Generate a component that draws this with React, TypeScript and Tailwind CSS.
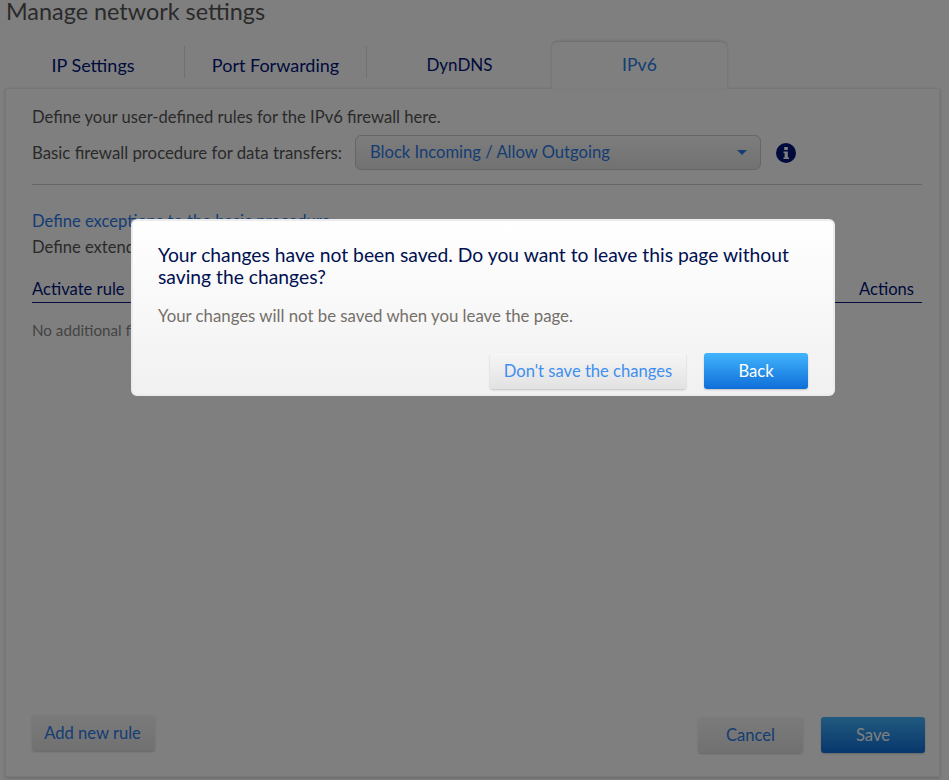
const font = "font-['Lato','Noto_Sans',sans-serif]"

function TabLabel({ label, className, divider }: { label: string; className: string; divider?: boolean }) {
  return (
    <div className={`${className} flex h-[32px] items-center justify-center pt-[6px] text-[#001478] ${divider ? 'border-r border-[#e2e2e2]' : ''}`}>
      {label}
    </div>
  )
}

function PageButton({ label, primary, className }: { label: string; primary?: boolean; className?: string }) {
  return (
    <button
      className={`h-[36px] rounded-[3px] text-[16.6px] shadow-[0_1px_2px_rgba(0,0,0,0.2)] ${
        primary
          ? 'bg-gradient-to-b from-[#42b4fc] to-[#0f6ed8] text-white'
          : 'bg-gradient-to-b from-[#f6f6f6] to-[#e2e2e2] text-[#2a7ae8]'
      } ${className ?? ''}`}
    >
      {label}
    </button>
  )
}

export default function App() {
  return (
    <div className={`${font} relative flex h-[780px] w-[949px] flex-col overflow-hidden bg-white`}>
      <h1 className="pl-[6px] text-[23.4px] leading-[23px] text-[#555]">Manage network settings</h1>

      <div className="relative z-10 mt-[18px] flex h-[47px] items-end pl-[5px]">
        <div className="flex pb-[10px]">
          <TabLabel label="IP Settings" className="w-[180px] pr-[3px] text-[18px]" divider />
          <TabLabel label="Port Forwarding" className="w-[182px] text-[18px]" divider />
        </div>
        <div className="flex w-[185px] justify-center pb-[10px]">
          <TabLabel label="DynDNS" className="w-[123px] text-[17px]" />
        </div>
        <div className="-mb-px flex h-[47px] w-[175px] items-center justify-center rounded-t-[6px] bg-white text-[17.6px] text-[#2a7ae8] shadow-[0_-1px_3px_rgba(0,0,0,0.18)]">
          IPv6
        </div>
      </div>

      <main className="ml-[5px] flex h-[689px] w-[935px] flex-col border border-[#eee] bg-white pl-[26px] pr-[17px] pt-[17px] pb-[23px] shadow-[0_1px_3px_rgba(0,0,0,0.2)]">
        <p className="text-[16.6px] leading-[22px] text-[#555]">Define your user-defined rules for the IPv6 firewall here.</p>
        <div className="mt-[7px] flex items-center">
          <span className="w-[323px] text-[16.8px] text-[#555]">Basic firewall procedure for data transfers:</span>
          <div className="flex h-[35px] w-[406px] items-center justify-between rounded-[6px] border border-[#ccc] bg-gradient-to-b from-[#fafafa] to-[#e4e4e4] pl-[14px] pr-[13px] text-[16.6px] text-[#2a7ae8]">
            <span>Block Incoming / Allow Outgoing</span>
            <span className="h-0 w-0 border-x-[5px] border-t-[5px] border-x-transparent border-t-[#2a7ae8]" />
          </div>
          <svg className="ml-[15px]" width="20" height="20" viewBox="0 0 20 20">
            <circle cx="10" cy="10" r="10" fill="#001478" />
            <rect x="8.2" y="4" width="3.6" height="3" fill="#fff" />
            <path d="M7.5 8.5h4.3v6h1.2v1.6H7.5v-1.6h1.1v-4.4H7.5z" fill="#fff" />
          </svg>
        </div>
        <div className="mt-[14px] border-t border-[#ccc]" />

        <p className="mt-[25px] text-[16.6px] leading-[22px] text-[#2a7ae8]">Define exceptions to the basic procedure</p>
        <p className="mt-[4px] text-[16.6px] leading-[22px] text-[#555]">Define extended rules for the firewall</p>

        <div className="mt-[20px] flex h-[25px] items-start justify-between border-b border-[#001478] pr-[8px] text-[16.6px] leading-[22px] text-[#001478]">
          <span>Activate rule</span>
          <span>Actions</span>
        </div>
        <p className="mt-[16px] text-[15.2px] leading-[22px] text-[#888]">No additional firewall rules</p>

        <div className="mt-auto flex items-end justify-between">
          <PageButton label="Add new rule" className="mb-[2px] w-[123px] pr-[2px]" />
          <div className="-mr-[3px] flex gap-[18px]">
            <PageButton label="Cancel" className="w-[105px]" />
            <PageButton label="Save" primary className="w-[104px]" />
          </div>
        </div>
      </main>

      <div className="absolute inset-0 z-20 bg-black/50 pl-[131px] pt-[219px]">
        <div className="flex h-[177px] w-[704px] flex-col rounded-[6px] border-2 border-[#ececec] bg-gradient-to-b from-white to-[#f1f1f1] pl-[25px] pr-[25px] pt-[23px]">
          <h2 className="text-[19.3px] leading-[22px] text-[#001050]">
            Your changes have not been saved. Do you want to leave this page without saving the changes?
          </h2>
          <p className="mt-[17px] text-[16.8px] leading-[22px] text-[#756f6a]">Your changes will not be saved when you leave the page.</p>
          <div className="mt-[26px] flex justify-end gap-[18px]">
            <PageButton label="Don't save the changes" className="w-[196px] !text-[#3f8ff0]" />
            <PageButton label="Back" primary className="w-[104px]" />
          </div>
        </div>
      </div>
    </div>
  )
}
